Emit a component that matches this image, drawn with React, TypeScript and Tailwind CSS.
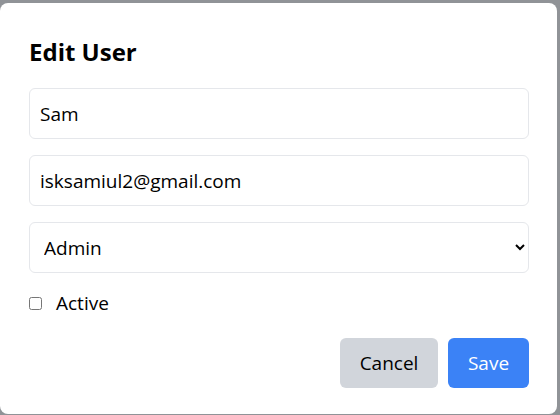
import { useState } from 'react'

export default function App() {
  const [name, setName] = useState('Sam')
  const [email, setEmail] = useState('isksamiul2@gmail.com')
  const [role, setRole] = useState('Admin')
  const [active, setActive] = useState(false)

  return (
    <div className="h-[415px] w-[560px] overflow-hidden bg-[#909397] pt-[3px] font-['Open_Sans',sans-serif]">
      <div className="flex h-[411px] w-[557px] flex-col rounded-lg bg-white pl-[29px] pr-[28px] pt-[33px]">
        <h2 className="mb-[20px] h-8 text-2xl leading-8 font-bold text-black">
          Edit User
        </h2>
        <input
          value={name}
          onChange={(e) => setName(e.target.value)}
          className="mb-4 h-[51px] w-full rounded-md border border-[#e5e7eb] px-2.5 text-[19px] text-black outline-none"
        />
        <input
          value={email}
          onChange={(e) => setEmail(e.target.value)}
          className="mb-4 h-[51px] w-full rounded-md border border-[#e5e7eb] px-2.5 text-[19px] text-black outline-none"
        />
        <select
          value={role}
          onChange={(e) => setRole(e.target.value)}
          className="h-[51px] w-full rounded-md border border-[#e5e7eb] bg-white pl-2.5 pr-1.5 text-[19px] text-black outline-none"
        >
          <option>Admin</option>
          <option>User</option>
        </select>
        <label className="mt-[19px] flex h-[22px] items-center gap-[14px] text-[19px] text-black">
          <input
            type="checkbox"
            checked={active}
            onChange={(e) => setActive(e.target.checked)}
            className="size-[13px]"
          />
          Active
        </label>
        <div className="mt-[24px] flex justify-end gap-2.5">
          <button className="h-[50px] w-[98px] rounded-md bg-[#d1d5db] text-[19px] text-black">
            Cancel
          </button>
          <button className="h-[50px] w-[81px] rounded-md bg-[#3b82f6] text-[19px] text-white">
            Save
          </button>
        </div>
      </div>
    </div>
  )
}
